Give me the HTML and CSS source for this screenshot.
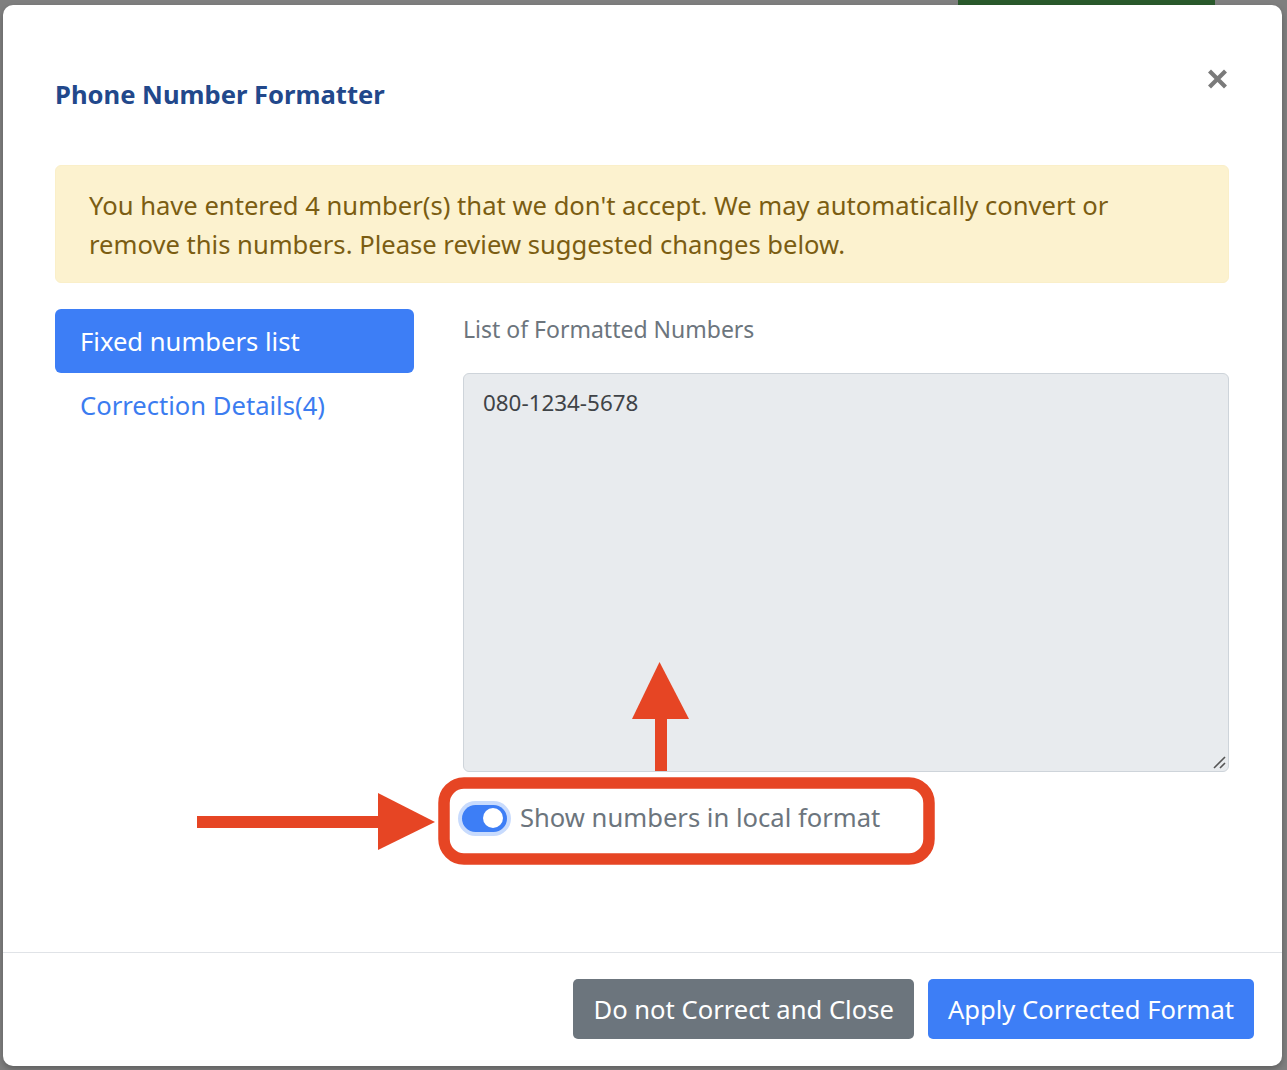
FILE: index.html
```html
<!DOCTYPE html>
<html lang="en">
<head>
<meta charset="utf-8">
<title>Phone Number Formatter</title>
<link rel="stylesheet" href="styles.css">
</head>
<body>
<div class="backdrop-strip"></div>
<div class="modal">
  <div class="modal-header">
    <h1 class="modal-title">Phone Number Formatter</h1>
    <button class="close-btn" aria-label="Close">
      <svg width="19" height="20" viewBox="0 0 19 20"><path d="M3 3.5L16 16.5M16 3.5L3 16.5" stroke="#7a7a7a" stroke-width="4.2" stroke-linecap="square"/></svg>
    </button>
  </div>
  <div class="modal-body">
    <div class="alert">You have entered 4 number(s) that we don't accept. We may automatically convert or remove this numbers. Please review suggested changes below.</div>
    <div class="content-row">
      <nav class="side-nav">
        <div class="nav-item active">Fixed numbers list</div>
        <div class="nav-item">Correction Details(4)</div>
      </nav>
      <div class="main-col">
        <div class="field-label">List of Formatted Numbers</div>
        <div class="textarea">080-1234-5678
          <svg class="grip" width="14" height="14" viewBox="0 0 14 14"><path d="M2 13L13 2M8 13L13 8" stroke="#555" stroke-width="1.6"/></svg>
        </div>
        <div class="switch-row">
          <span class="switch"><span class="knob"></span></span>
          <span class="switch-label">Show numbers in local format</span>
        </div>
      </div>
    </div>
  </div>
  <div class="modal-footer">
    <button class="btn btn-secondary">Do not Correct and Close</button>
    <button class="btn btn-primary">Apply Corrected Format</button>
  </div>
</div>
<svg class="annotations" width="1287" height="1070" viewBox="0 0 1287 1070">
  <rect x="444" y="783" width="485" height="76" rx="20" ry="20" fill="none" stroke="#e64524" stroke-width="11.5"/>
  <rect x="197" y="816" width="182" height="12" fill="#e64524"/>
  <polygon points="378,793 435,822 378,850" fill="#e64524"/>
  <rect x="655" y="716" width="12" height="55" fill="#e64524"/>
  <polygon points="632,719 659.5,662 689,719" fill="#e64524"/>
</svg>
</body>
</html>
```

FILE: styles.css
```css
* { box-sizing: border-box; }
html, body { margin: 0; padding: 0; }
body {
  width: 1287px;
  height: 1070px;
  background: #7f7f7f;
  font-family: "Noto Sans", "Open Sans", sans-serif;
  overflow: hidden;
  position: relative;
}
.backdrop-strip {
  position: absolute;
  left: 958px;
  top: 0;
  width: 257px;
  height: 5px;
  background: #2a5a2c;
}
.modal {
  margin: 5px 5px 0 3px;
  width: 1279px;
  height: 1061px;
  background: #fff;
  border-radius: 10px;
  box-shadow: 0 3px 6px rgba(0,0,0,0.25);
  display: flex;
  flex-direction: column;
  position: relative;
}
.modal-header {
  display: flex;
  justify-content: space-between;
  align-items: flex-start;
  padding: 72px 55px 0 52px;
}
.modal-title {
  margin: 0;
  font-size: 25.6px;
  line-height: 36px;
  font-weight: 700;
  color: #22488b;
}
.close-btn {
  border: 0;
  background: none;
  padding: 0;
  margin-top: -8px;
  width: 19px;
  height: 20px;
  cursor: pointer;
}
.close-btn svg { display: block; }
.modal-body {
  flex: 1;
  padding: 52px 53px 0 52px;
}
.alert {
  background: #fcf2cf;
  border: 1px solid #faefc9;
  border-radius: 6px;
  color: #7b5d12;
  font-size: 25.6px;
  line-height: 39px;
  padding: 20px 40px 18px 33px;
}
.content-row {
  display: flex;
  gap: 49px;
  margin-top: 26px;
}
.side-nav {
  width: 359px;
  flex: none;
  display: flex;
  flex-direction: column;
}
.nav-item {
  height: 64px;
  display: flex;
  align-items: center;
  padding-left: 25px;
  font-size: 25.6px;
  color: #3b7cf0;
  border-radius: 6px;
}
.nav-item.active {
  background: #3d7ef6;
  color: #fff;
}
.main-col {
  flex: 1;
  display: flex;
  flex-direction: column;
}
.field-label {
  height: 40px;
  line-height: 40px;
  margin-bottom: 24px;
  font-size: 23px;
  color: #6c757d;
}
.textarea {
  position: relative;
  height: 399px;
  background: #e8ebee;
  border: 1px solid #ced4da;
  border-radius: 6px;
  padding: 12px 19px;
  font-size: 22.4px;
  line-height: 33px;
  color: #3f4347;
}
.grip {
  position: absolute;
  right: 2px;
  bottom: 2px;
}
.switch-row {
  display: flex;
  align-items: center;
  gap: 13px;
  margin-top: 28px;
  margin-left: -1px;
}
.switch {
  position: relative;
  width: 45px;
  height: 27px;
  border-radius: 14px;
  background: #3d7ef6;
  box-shadow: 0 0 0 4px #c8dbfd;
  flex: none;
}
.knob {
  position: absolute;
  right: 4px;
  top: 3.5px;
  width: 20px;
  height: 20px;
  border-radius: 50%;
  background: #fff;
}
.switch-label {
  font-size: 25.6px;
  color: #6c757d;
  line-height: 36px;
}
.modal-footer {
  border-top: 1px solid #e0e3e7;
  display: flex;
  justify-content: flex-end;
  gap: 14px;
  padding: 26px 28px 27px 0;
}
.btn {
  height: 60px;
  border: 0;
  border-radius: 5px;
  font-family: "Noto Sans", "Open Sans", sans-serif;
  font-size: 25.6px;
  color: #fff;
  padding: 0 20px;
}
.btn-secondary { background: #6c757d; }
.btn-primary { background: #3d7ef6; }
.annotations {
  position: absolute;
  left: 0;
  top: 0;
  pointer-events: none;
}
```
